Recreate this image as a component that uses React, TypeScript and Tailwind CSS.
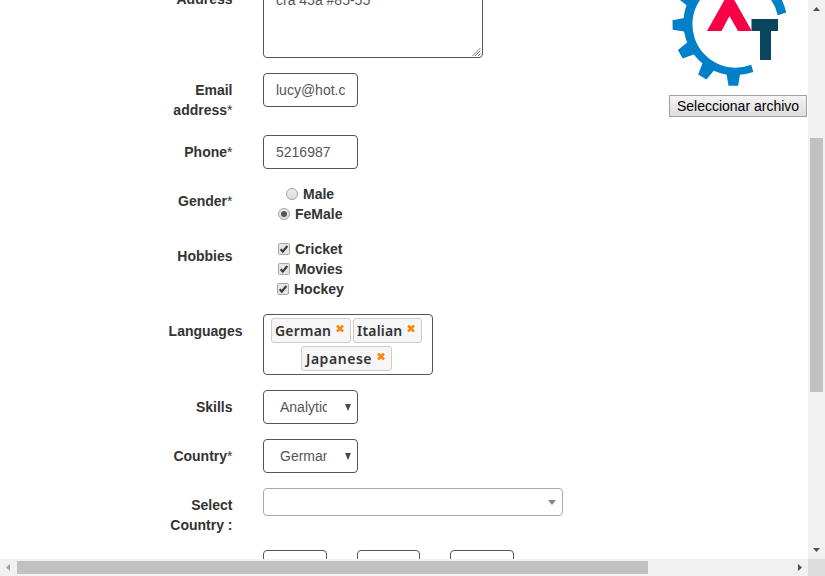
import type { ReactNode } from 'react';

function Row({ label, required, wide, labelTop, children }: { label?: string; required?: boolean; wide?: boolean; labelTop?: string; children: ReactNode }) {
  return (
    <div className="flex items-start">
      <div
        className={`${wide ? 'mr-[20.5px] w-[92.5px]' : 'mr-[30.5px] w-[82.5px]'} ${labelTop ?? 'pt-[7px]'} shrink-0 text-right font-bold`}
      >
        {label}
        {required && <span className="font-normal">*</span>}
      </div>
      {children}
    </div>
  );
}

function TextBox({ value }: { value: string }) {
  return (
    <div className="h-[34px] w-[95px] rounded-[4px] border border-[#555] px-3 py-[6px] text-[#555]">
      <div className="overflow-hidden whitespace-nowrap">{value}</div>
    </div>
  );
}

function SelectBox({ value }: { value: string }) {
  return (
    <div className="flex h-[34px] w-[95px] items-center rounded-[4px] border border-[#555] pl-4 text-[#555]">
      <div className="w-[47px] overflow-hidden whitespace-nowrap">{value}</div>
      <svg className="ml-[18px] h-[7px] w-[6px]" viewBox="0 0 6 7">
        <path d="M0 0H6L3 7Z" fill="#4a4a4a" />
      </svg>
    </div>
  );
}

function Radio({ checked }: { checked?: boolean }) {
  return (
    <svg className="mr-[5px] h-3 w-3" viewBox="0 0 12 12">
      <defs>
        <linearGradient id="radio" x1="0" y1="0" x2="0" y2="1">
          <stop offset="0" stopColor="#eee" />
          <stop offset="1" stopColor="#ddd" />
        </linearGradient>
      </defs>
      <circle cx="6" cy="6" r="5.5" fill="url(#radio)" stroke="#a4a4a4" />
      {checked && <circle cx="6" cy="6" r="3" fill="#555" />}
    </svg>
  );
}

function Check() {
  return (
    <svg className="mr-[5px] h-3 w-3" viewBox="0 0 12 12">
      <rect x="0.5" y="0.5" width="11" height="11" rx="1.2" fill="#e6e6e6" stroke="#a8a8a8" />
      <path d="M2.6 6.2L4.8 8.6L9.3 3" fill="none" stroke="#3c3c3c" strokeWidth="2.2" />
    </svg>
  );
}

function Tag({ name, width, tracking }: { name: string; width: string; tracking: string }) {
  return (
    <div className={`${width} flex h-[25px] items-center rounded-[3px] border border-[#ccc] bg-[#f6f6f6] pl-[3px]`}>
      <span className={`${tracking} font-['Noto_Sans'] text-[14px] font-semibold leading-[20px]`}>{name}</span>
      <svg className="mb-1 ml-auto mr-[6.5px] h-[7px] w-[8px]" viewBox="0 0 8 7">
        <path d="M1 0.5L7 6.5M7 0.5L1 6.5" stroke="#ff8400" strokeWidth="2.5" />
      </svg>
    </div>
  );
}

function Logo() {
  const teeth = [90, 120.5, 150.5, 179, 209];
  return (
    <svg className="block h-[90px] w-[130px]" viewBox="665 0 130 90">
      <path
        d="M751.2 64.8A43.2 43.2 0 1 1 777.8 15.2L786.2 12.4A52 52 0 1 0 753.3 72Z"
        fill="#0080c8"
      />
      {teeth.map((angle) => (
        <path key={angle} d="M782 18L795 20.2V29.8L782 32Z" fill="#0080c8" transform={`rotate(${angle} 733.8 24.5)`} />
      ))}
      <path d="M707 31L727.3 -5H731.5L751.8 31H738L729.5 16L721.5 31Z" fill="#f80046" />
      <path d="M751.5 19H778V31H771V60H760V31H751.5Z" fill="#09455c" />
    </svg>
  );
}

export default function App() {
  return (
    <div className="flex h-[576px] w-[825px] flex-col overflow-hidden bg-white font-['Liberation_Sans',Arial,sans-serif] text-[14px] leading-[20px] text-[#333]">
      <div className="flex h-[559px]">
        <main className="flex h-[559px] w-[808px] items-start overflow-hidden pl-[150px]">
          <div className="-mt-[17px] flex w-[515px] flex-col gap-[15px]">
            <Row label="Address" labelTop="pt-[6px]">
              <div className="flex h-[75px] w-[220px] items-end justify-between rounded-b-[4px] border border-[#555] text-[#555]">
                <span className="self-start pl-3 pt-[6px]">cra 45a #85-55</span>
                <svg className="h-[10px] w-[10px]" viewBox="0 0 10 10">
                  <path d="M0.5 9L8.5 1M3 9L8.5 3.5M6 9L8.5 6.5" stroke="#555" strokeWidth="0.8" />
                </svg>
              </div>
            </Row>
            <Row label="Email address" required>
              <TextBox value="lucy@hot.c" />
            </Row>
            <Row label="Phone" required>
              <TextBox value="5216987" />
            </Row>
            <Row label="Gender" required>
              <div className="pl-[15px] font-bold">
                <div className="flex items-center pl-2"><Radio />Male</div>
                <div className="flex items-center"><Radio checked />FeMale</div>
              </div>
            </Row>
            <Row label="Hobbies">
              <div className="pl-[14px] font-bold">
                <div className="flex items-center pl-px"><Check />Cricket</div>
                <div className="flex items-center pl-px"><Check />Movies</div>
                <div className="flex items-center"><Check />Hockey</div>
              </div>
            </Row>
            <Row label="Languages" wide>
              <div className="flex h-[61px] w-[170px] flex-col gap-[3px] rounded-[4px] border border-[#555] pt-[3px]">
                <div className="flex gap-[2px] pl-[7px]">
                  <Tag name="German" width="w-[80px]" tracking="tracking-[0.2px]" />
                  <Tag name="Italian" width="w-[69px]" tracking="tracking-[0.2px]" />
                </div>
                <div className="flex pl-[37px]">
                  <Tag name="Japanese" width="w-[91px]" tracking="pl-px tracking-[0.55px]" />
                </div>
              </div>
            </Row>
            <Row label="Skills">
              <SelectBox value="Analytics" />
            </Row>
            <Row label="Country" required>
              <SelectBox value="Germany" />
            </Row>
            <Row label="Select Country :">
              <div className="flex h-[28px] w-[300px] items-center justify-end rounded-[4px] border border-[#aaa] pr-[6px]">
                <svg className="h-[5px] w-[8px]" viewBox="0 0 8 5">
                  <path d="M0 0H8L4 5Z" fill="#888" />
                </svg>
              </div>
            </Row>
            <Row>
              <div className="flex gap-[30px]">
                <div className="h-[34px] w-[64px] rounded-[4px] border border-[#555]" />
                <div className="h-[34px] w-[63px] rounded-[4px] border border-[#555]" />
                <div className="h-[34px] w-[64px] rounded-[4px] border border-[#555]" />
              </div>
            </Row>
          </div>
          <div className="w-[143px]">
            <Logo />
            <button className="ml-1 mt-[5px] h-[22px] w-[138px] whitespace-nowrap border border-[#a0a0a0] bg-linear-to-b from-[#f4f4f4] to-[#dedede] text-[14px] leading-[20px] text-black">
              Seleccionar archivo
            </button>
          </div>
        </main>
        <div className="flex w-[17px] flex-col items-center bg-[#f1f1f1] pt-[7px]">
          <svg className="h-1 w-[7px]" viewBox="0 0 7 4"><path d="M0 4H7L3.5 0Z" fill="#505050" /></svg>
          <div className="mt-[127px] h-[254px] w-[13px] bg-[#c1c1c1]" />
          <svg className="mt-[156px] h-1 w-[7px]" viewBox="0 0 7 4"><path d="M0 0H7L3.5 4Z" fill="#505050" /></svg>
        </div>
      </div>
      <div className="flex h-[17px] items-center bg-[#f1f1f1]">
        <svg className="ml-[6px] h-[7px] w-1" viewBox="0 0 4 7"><path d="M4 0V7L0 3.5Z" fill="#a3a3a3" /></svg>
        <div className="ml-[7px] h-[13px] w-[631px] bg-[#c1c1c1]" />
        <svg className="ml-[150px] h-[7px] w-1" viewBox="0 0 4 7"><path d="M0 0V7L4 3.5Z" fill="#505050" /></svg>
        <div className="ml-auto h-[17px] w-[17px] bg-[#dcdcdc]" />
      </div>
    </div>
  );
}
